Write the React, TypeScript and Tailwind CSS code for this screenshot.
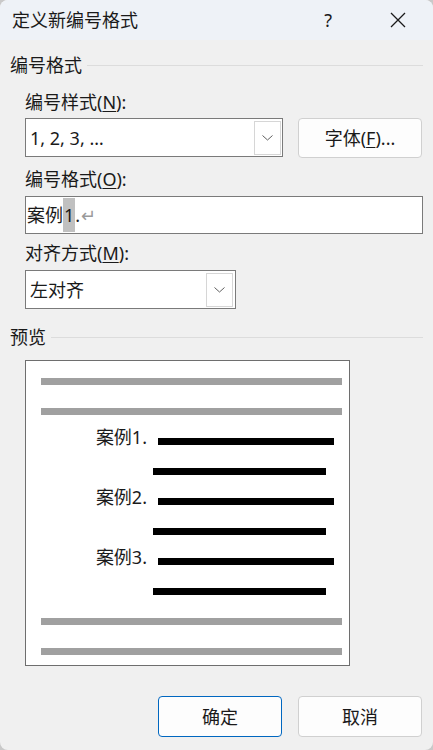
import React from "react";

const font = { fontFamily: '"Noto Sans", "Noto Sans CJK SC", sans-serif' };

const Chevron = () => (
  <svg width="11" height="6" viewBox="0 0 11 6" fill="none">
    <path d="M0.5 0.5 L5.5 5 L10.5 0.5" stroke="#5f5f5f" strokeWidth="1" />
  </svg>
);

const DropButton = () => (
  <div className="flex h-[34px] w-[27px] items-center justify-center border border-[#d6d6d6] bg-white">
    <Chevron />
  </div>
);

const SectionHeader = ({ title }: { title: string }) => (
  <div className="flex h-6 items-center">
    <span className="ml-[10px] text-[18px] leading-6">{title}</span>
    <div className="ml-[5px] mr-[10px] h-px flex-1 bg-[#dcdcdc]" />
  </div>
);

const GrayBar = () => (
  <div className="h-[30px]">
    <div className="ml-[15px] h-[7px] w-[301px] bg-[#a0a0a0]" />
  </div>
);

const ShortBar = () => (
  <div className="h-[30px]">
    <div className="ml-[127px] h-[7px] w-[173px] bg-black" />
  </div>
);

const LabelRow = ({ label }: { label: string }) => (
  <div className="flex h-[30px] items-start">
    <div className="-mt-[12px] w-[121px] text-right text-[18px] leading-[22px]">{label}</div>
    <div className="ml-[11px] h-[7px] w-[176px] bg-black" />
  </div>
);

const App = () => {
  const items = ["案例1.", "案例2.", "案例3."];

  return (
    <div className="h-[750px] w-[433px] bg-[#c9c9c9] text-[#1a1a1a]" style={font}>
      <div className="flex h-full flex-col overflow-hidden rounded-[8px] bg-[#f0f0f0]">
        {/* title bar */}
        <div className="flex h-10 items-center bg-[#eef2f7]">
          <span className="ml-3 text-[18px] leading-6">定义新编号格式</span>
          <span className="ml-auto text-[18px] leading-6">?</span>
          <div className="ml-[58px] mr-[27px] flex h-4 w-4 items-center justify-center">
            <svg width="16" height="16" viewBox="0 0 16 16">
              <path d="M1 1 L15 15 M15 1 L1 15" stroke="#1a1a1a" strokeWidth="1.3" />
            </svg>
          </div>
        </div>

        <div className="mt-[13px]">
          <SectionHeader title="编号格式" />
        </div>

        <div className="ml-[25px] mr-[10px] flex flex-col">
          <div className="mt-[13px] h-6 text-[18px] leading-6">
            编号样式(<span className="underline underline-offset-2">N</span>):
          </div>
          <div className="mt-1 flex h-10 items-start">
            <div className="flex h-[39px] w-[258px] items-center justify-between border border-[#7a7a7a] bg-white pl-1 pr-px">
              <span className="text-[18px] leading-6">1, 2, 3, …</span>
              <DropButton />
            </div>
            <div className="ml-[15px] flex h-10 w-[124px] items-center justify-center rounded-[4px] border border-[#d0d0d0] bg-[#fdfdfd] text-[18px] leading-6">
              字体(<span className="underline underline-offset-2">F</span>)...
            </div>
          </div>

          <div className="mt-[9px] h-6 text-[18px] leading-6">
            编号格式(<span className="underline underline-offset-2">O</span>):
          </div>
          <div className="mt-[5px] flex h-[38px] w-[398px] items-stretch border border-[#7a7a7a] bg-white pl-px">
            <div className="flex items-center text-[18px] leading-6">
              <span>案例</span>
              <span className="flex h-[34px] items-center bg-[#c0c0c0] px-px">1</span>
              <span>.</span>
              <span className="ml-px text-[18px] text-[#9a9a9a]">↵</span>
            </div>
          </div>

          <div className="mt-[7px] h-6 text-[18px] leading-6">
            对齐方式(<span className="underline underline-offset-2">M</span>):
          </div>
          <div className="mt-[5px] flex h-[39px] w-[211px] items-center justify-between border border-[#7a7a7a] bg-white pl-1 pr-[2px]">
            <span className="text-[18px] leading-6">左对齐</span>
            <DropButton />
          </div>
        </div>

        <div className="mt-4">
          <SectionHeader title="预览" />
        </div>

        {/* preview */}
        <div className="ml-[25px] mt-[11px] h-[306px] w-[325px] border border-[#6e6e6e] bg-white pt-[17px]">
          <GrayBar />
          <GrayBar />
          {items.map((label) => (
            <React.Fragment key={label}>
              <LabelRow label={label} />
              <ShortBar />
            </React.Fragment>
          ))}
          <GrayBar />
          <GrayBar />
        </div>

        {/* buttons */}
        <div className="mt-[30px] flex justify-end gap-4 pr-[11px]">
          <div className="flex h-[41px] w-[124px] items-center justify-center rounded-[4px] border border-[#0067c0] bg-[#fdfdfd] text-[18px] leading-6">
            确定
          </div>
          <div className="flex h-[41px] w-[124px] items-center justify-center rounded-[4px] border border-[#d0d0d0] bg-[#fdfdfd] text-[18px] leading-6">
            取消
          </div>
        </div>
      </div>
    </div>
  );
};

export default App;
